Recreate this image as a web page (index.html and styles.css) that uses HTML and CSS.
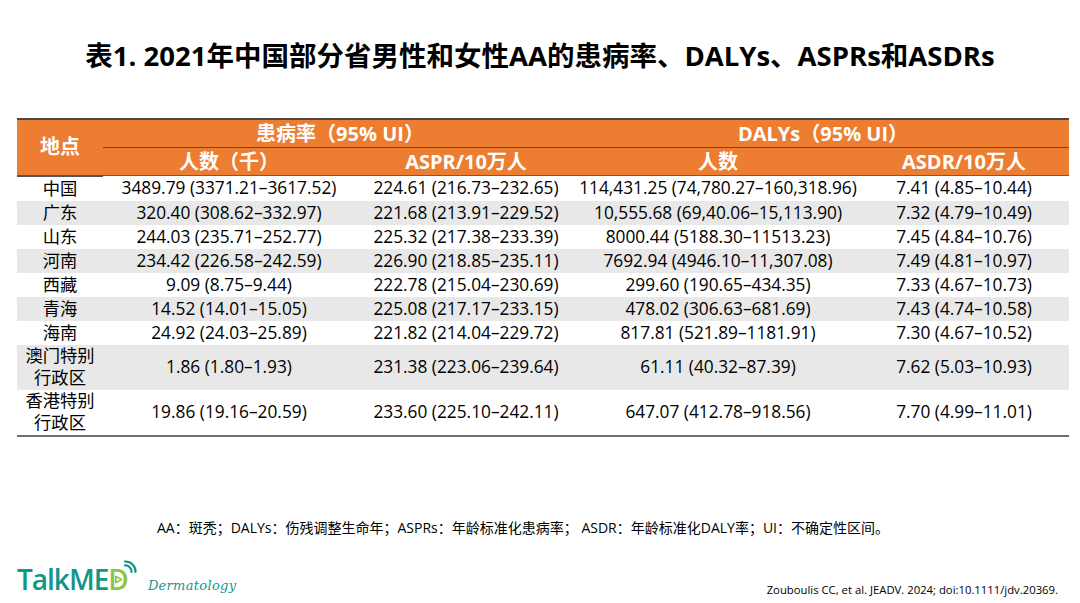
FILE: index.html
```html
<!DOCTYPE html>
<html lang="zh">
<head>
<meta charset="utf-8">
<link rel="stylesheet" href="styles.css">
</head>
<body>
<div class="slide">
  <h1 class="title">表1. 2021年中国部分省男性和女性AA的患病率、DALYs、ASPRs和ASDRs</h1>
  <table class="data">
    <colgroup>
      <col class="c0"><col class="c1"><col class="c2"><col class="c3"><col class="c4">
    </colgroup>
    <thead>
      <tr class="h1">
        <th rowspan="2" class="loc">地点</th>
        <th colspan="2" class="grp">患病率（95% UI）</th>
        <th colspan="2" class="grp">DALYs（95% UI）</th>
      </tr>
      <tr class="h2">
        <th>人数（千）</th>
        <th>ASPR/10万人</th>
        <th>人数</th>
        <th>ASDR/10万人</th>
      </tr>
    </thead>
    <tbody>
      <tr><td class="name">中国</td><td>3489.79 (3371.21–3617.52)</td><td>224.61 (216.73–232.65)</td><td>114,431.25 (74,780.27–160,318.96)</td><td>7.41 (4.85–10.44)</td></tr>
      <tr class="alt"><td class="name">广东</td><td>320.40 (308.62–332.97)</td><td>221.68 (213.91–229.52)</td><td>10,555.68 (69,40.06–15,113.90)</td><td>7.32 (4.79–10.49)</td></tr>
      <tr><td class="name">山东</td><td>244.03 (235.71–252.77)</td><td>225.32 (217.38–233.39)</td><td>8000.44 (5188.30–11513.23)</td><td>7.45 (4.84–10.76)</td></tr>
      <tr class="alt"><td class="name">河南</td><td>234.42 (226.58–242.59)</td><td>226.90 (218.85–235.11)</td><td>7692.94 (4946.10–11,307.08)</td><td>7.49 (4.81–10.97)</td></tr>
      <tr><td class="name">西藏</td><td>9.09 (8.75–9.44)</td><td>222.78 (215.04–230.69)</td><td>299.60 (190.65–434.35)</td><td>7.33 (4.67–10.73)</td></tr>
      <tr class="alt"><td class="name">青海</td><td>14.52 (14.01–15.05)</td><td>225.08 (217.17–233.15)</td><td>478.02 (306.63–681.69)</td><td>7.43 (4.74–10.58)</td></tr>
      <tr><td class="name">海南</td><td>24.92 (24.03–25.89)</td><td>221.82 (214.04–229.72)</td><td>817.81 (521.89–1181.91)</td><td>7.30 (4.67–10.52)</td></tr>
      <tr class="alt tall"><td class="name">澳门特别<br>行政区</td><td>1.86 (1.80–1.93)</td><td>231.38 (223.06–239.64)</td><td>61.11 (40.32–87.39)</td><td>7.62 (5.03–10.93)</td></tr>
      <tr class="tall last"><td class="name">香港特别<br>行政区</td><td>19.86 (19.16–20.59)</td><td>233.60 (225.10–242.11)</td><td>647.07 (412.78–918.56)</td><td>7.70 (4.99–11.01)</td></tr>
    </tbody>
  </table>
  <p class="note">AA：斑秃；DALYs：伤残调整生命年；ASPRs：年龄标准化患病率； ASDR：年龄标准化DALY率；UI：不确定性区间。</p>
  <div class="footer">
    <div class="logo">
      <span class="brand">TalkME<span class="d">D<svg class="play" viewBox="0 0 10 10" width="9" height="9"><polygon points="2,1.5 8.5,5 2,8.5" fill="none" stroke="#8cc63e" stroke-width="1.8" stroke-linejoin="round"/></svg></span></span>
      <svg class="waves" viewBox="0 0 16 16" width="16" height="16">
        <path d="M3 5.5 A6 6 0 0 1 9.5 12" fill="none" stroke="#13968a" stroke-width="2.2" stroke-linecap="round"/>
        <path d="M3 1.5 A10 10 0 0 1 13.5 12" fill="none" stroke="#13968a" stroke-width="2.2" stroke-linecap="round"/>
      </svg>
      <span class="derm">Dermatology</span>
    </div>
    <div class="cite">Zouboulis CC, et al. JEADV. 2024; doi:10.1111/jdv.20369.</div>
  </div>
</div>
</body>
</html>
```
FILE: styles.css
```css
html, body {
  margin: 0;
  padding: 0;
  background: #fff;
}
.slide {
  width: 1080px;
  height: 603px;
  position: relative;
  overflow: hidden;
  font-family: "Open Sans", "Noto Sans CJK SC", sans-serif;
  color: #000;
}
.title {
  margin: 0;
  padding-top: 38px;
  height: 118px;
  box-sizing: border-box;
  text-align: center;
  font-size: 27.5px;
  font-weight: 700;
  line-height: 36px;
  letter-spacing: 0;
}
.data {
  margin-left: 17px;
  width: 1052px;
  border-collapse: collapse;
  table-layout: fixed;
  border-top: 2px solid #4a4a4a;
}
.c0 { width: 86px; }
.c1 { width: 252px; }
.c2 { width: 222px; }
.c3 { width: 282px; }
.c4 { width: 210px; }
thead th {
  background: #ed7d31;
  color: #fff;
  font-weight: 700;
  font-size: 20px;
  padding: 0;
  text-align: center;
  line-height: 26px;
}
.h1 th { height: 27px; }
.h1 th.grp { border-bottom: 1px solid #6b4a33; }
.h2 th { height: 27px; border-bottom: 1px solid #7a5a44; }
.h1 th.loc { border-bottom: 2px solid #555; }
tbody td {
  font-size: 17.3px;
  text-align: center;
  padding: 0;
  height: 24px;
  line-height: 22px;
  white-space: nowrap;
}
tbody tr.alt td { background: #e8e8e8; }
tbody tr.tall td { height: 45px; line-height: 22px; }
tbody tr.last td { border-bottom: 2px solid #6e6e6e; }
.note {
  margin: 0;
  position: absolute;
  left: 157px;
  top: 518px;
  font-size: 14px;
  line-height: 20px;
}
.footer {
  position: absolute;
  left: 0;
  right: 0;
  bottom: 0;
  height: 45px;
}
.logo {
  position: absolute;
  left: 17px;
  top: 2px;
  display: flex;
  align-items: flex-end;
}
.brand {
  font-family: "Open Sans", sans-serif;
  font-size: 28px;
  font-weight: 600;
  color: #13968a;
  letter-spacing: -1px;
  line-height: 38px;
}
.brand .d {
  color: #8cc63e;
  position: relative;
}
.play {
  position: absolute;
  left: 6px;
  top: 15px;
}
.waves {
  margin-left: -6px;
  margin-bottom: 22px;
}
.derm {
  font-family: "DejaVu Serif", serif;
  font-style: italic;
  font-size: 13px;
  color: #13968a;
  margin-left: 10px;
  margin-bottom: 5px;
  letter-spacing: 0.3px;
}
.cite {
  position: absolute;
  right: 22px;
  bottom: 6px;
  font-size: 11.3px;
  line-height: 14px;
}
```
